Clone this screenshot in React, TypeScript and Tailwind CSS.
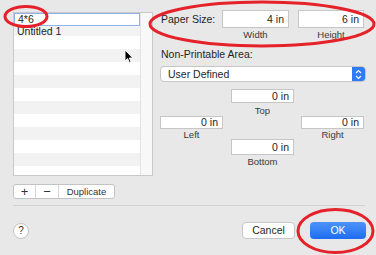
import React from "react";

const Field = ({ value, w }: { value: string; w: string }) => (
  <div
    className={`${w} h-[16px] bg-white border border-[#c6c6c6] flex items-center justify-end pr-[4px] text-[10.5px] text-[#222] leading-none`}
  >
    {value}
  </div>
);

export default function App() {
  const rows = Array.from({ length: 12 }, (_, i) => i);
  return (
    <div className="relative w-[376px] h-[255px] overflow-hidden bg-[#e8e8e8] font-['Liberation_Sans',Arial,sans-serif] text-[#1f1f1f]">
      {/* top section */}
      <div className="flex h-[199px] pt-[10px] pl-[13px]">
        {/* left column */}
        <div className="flex flex-col mt-[2px] w-[140px]">
          <div className="h-[164px] border border-[#c9c9c9] bg-white flex">
            <div className="flex-1 flex flex-col overflow-hidden">
              <div className="h-[13px] bg-white border border-[#8fb2ee] flex items-center pl-[3px] text-[10.5px] leading-none">
                4*6
              </div>
              <div className="h-[13px] bg-[#f3f3f3] flex items-center pl-[3px] text-[10.5px] leading-none">
                Untitled 1
              </div>
              {rows.map((i) => (
                <div
                  key={i}
                  className={`h-[13px] shrink-0 ${i % 2 === 0 ? "bg-white" : "bg-[#f2f2f2]"}`}
                />
              ))}
            </div>
            <div className="w-[12px] bg-[#f8f8f8] border-l border-[#e4e4e4]" />
          </div>
          <div className="mt-[8px] h-[15px] w-[102px] flex bg-white border border-[#c3c3c3] rounded-[3px] text-[#333]">
            <div className="w-[22px] flex items-center justify-center border-r border-[#d6d6d6] text-[13px] leading-none">
              +
            </div>
            <div className="w-[23px] flex items-center justify-center border-r border-[#d6d6d6] text-[13px] leading-none">
              −
            </div>
            <div className="flex-1 flex items-center justify-center text-[9.5px] leading-none">
              Duplicate
            </div>
          </div>
        </div>

        {/* right panel */}
        <div className="ml-[7px] w-[206px] flex flex-col">
          <div className="flex items-center h-[18px]">
            <div className="w-[62px] pl-[1px] text-[10.5px] leading-none">Paper Size:</div>
            <div className="w-[67px] h-[18px] bg-white border border-[#c6c6c6] flex items-center justify-end pr-[4px] text-[10.5px] leading-none">
              4 in
            </div>
            <div className="ml-[9px] w-[66px] h-[18px] bg-white border border-[#c6c6c6] flex items-center justify-end pr-[4px] text-[10.5px] leading-none">
              6 in
            </div>
          </div>
          <div className="flex mt-[2px] h-[10px] text-[9.5px] leading-[10px] text-[#3a3a3a]">
            <div className="w-[62px]" />
            <div className="w-[67px] text-center">Width</div>
            <div className="ml-[9px] w-[66px] text-center">Height</div>
          </div>
          <div className="mt-[8px] h-[12px] pl-[1px] text-[10.5px] leading-[12px]">Non-Printable Area:</div>
          <div className="mt-[6px] h-[16px] bg-white border border-[#c6c6c6] rounded-[4px] flex items-center overflow-hidden">
            <div className="flex-1 pl-[7px] text-[10.5px] leading-none">User Defined</div>
            <div className="w-[13px] h-full bg-[#2f7bf5] flex items-center justify-center">
              <svg width="7" height="11" viewBox="0 0 7 11">
                <path d="M1 4 L3.5 1.5 L6 4" stroke="white" strokeWidth="1.2" fill="none" />
                <path d="M1 7 L3.5 9.5 L6 7" stroke="white" strokeWidth="1.2" fill="none" />
              </svg>
            </div>
          </div>
          <div className="mt-[7px] grid grid-cols-[71px_70px_63px] grid-rows-[27px_23px_28px]">
            <div className="col-start-2 row-start-1 flex flex-col">
              <Field value="0 in" w="w-[63px]" />
              <div className="w-[63px] mt-[3px] text-center text-[9.5px] leading-[10px] text-[#3a3a3a]">Top</div>
            </div>
            <div className="col-start-1 row-start-2 flex flex-col">
              <Field value="0 in" w="w-[63px]" />
              <div className="w-[63px] mt-[1px] text-center text-[9.5px] leading-[10px] text-[#3a3a3a]">Left</div>
            </div>
            <div className="col-start-3 row-start-2 flex flex-col">
              <Field value="0 in" w="w-[63px]" />
              <div className="w-[63px] mt-[1px] text-center text-[9.5px] leading-[10px] text-[#3a3a3a]">Right</div>
            </div>
            <div className="col-start-2 row-start-3 flex flex-col">
              <Field value="0 in" w="w-[63px]" />
              <div className="w-[63px] mt-[2px] text-center text-[9.5px] leading-[10px] text-[#3a3a3a]">Bottom</div>
            </div>
          </div>
        </div>
      </div>

      {/* separator */}
      <div className="mt-[6px] ml-[13px] w-[352px] h-px bg-[#d3d3d3]" />

      {/* bottom bar */}
      <div className="mt-[16px] flex items-center h-[17px] pl-[13px]">
        <div className="w-[16px] h-[16px] rounded-full bg-white border border-[#c4c4c4] flex items-center justify-center text-[10px] leading-none text-[#333]">
          ?
        </div>
        <div className="ml-[213px] w-[53px] h-[17px] bg-white border border-[#c6c6c6] rounded-[4px] flex items-center justify-center text-[10.5px] leading-none">
          Cancel
        </div>
        <div className="ml-[15px] w-[56px] h-[17px] rounded-[4px] bg-gradient-to-b from-[#4c93f8] to-[#1d6cf1] flex items-center justify-center text-white text-[10.5px] leading-none">
          OK
        </div>
      </div>

      {/* mouse cursor */}
      <svg className="absolute left-[124px] top-[49px]" width="10" height="15" viewBox="0 0 10 15">
        <path
          d="M1 1 L1 12 L3.6 9.6 L5.4 13.6 L7 12.9 L5.3 9 L8.8 9 Z"
          fill="black"
          stroke="white"
          strokeWidth="0.9"
          strokeLinejoin="round"
        />
      </svg>

      {/* red annotation ellipses */}
      <svg className="absolute inset-0 pointer-events-none" width="376" height="255" viewBox="0 0 376 255">
        <ellipse cx="26" cy="16.5" rx="21" ry="10" fill="none" stroke="#e52229" strokeWidth="3" />
        <ellipse cx="262" cy="24" rx="112" ry="22" fill="none" stroke="#e52229" strokeWidth="3" />
        <ellipse cx="335.5" cy="231" rx="37.5" ry="21.5" fill="none" stroke="#e52229" strokeWidth="3" />
      </svg>
    </div>
  );
}
